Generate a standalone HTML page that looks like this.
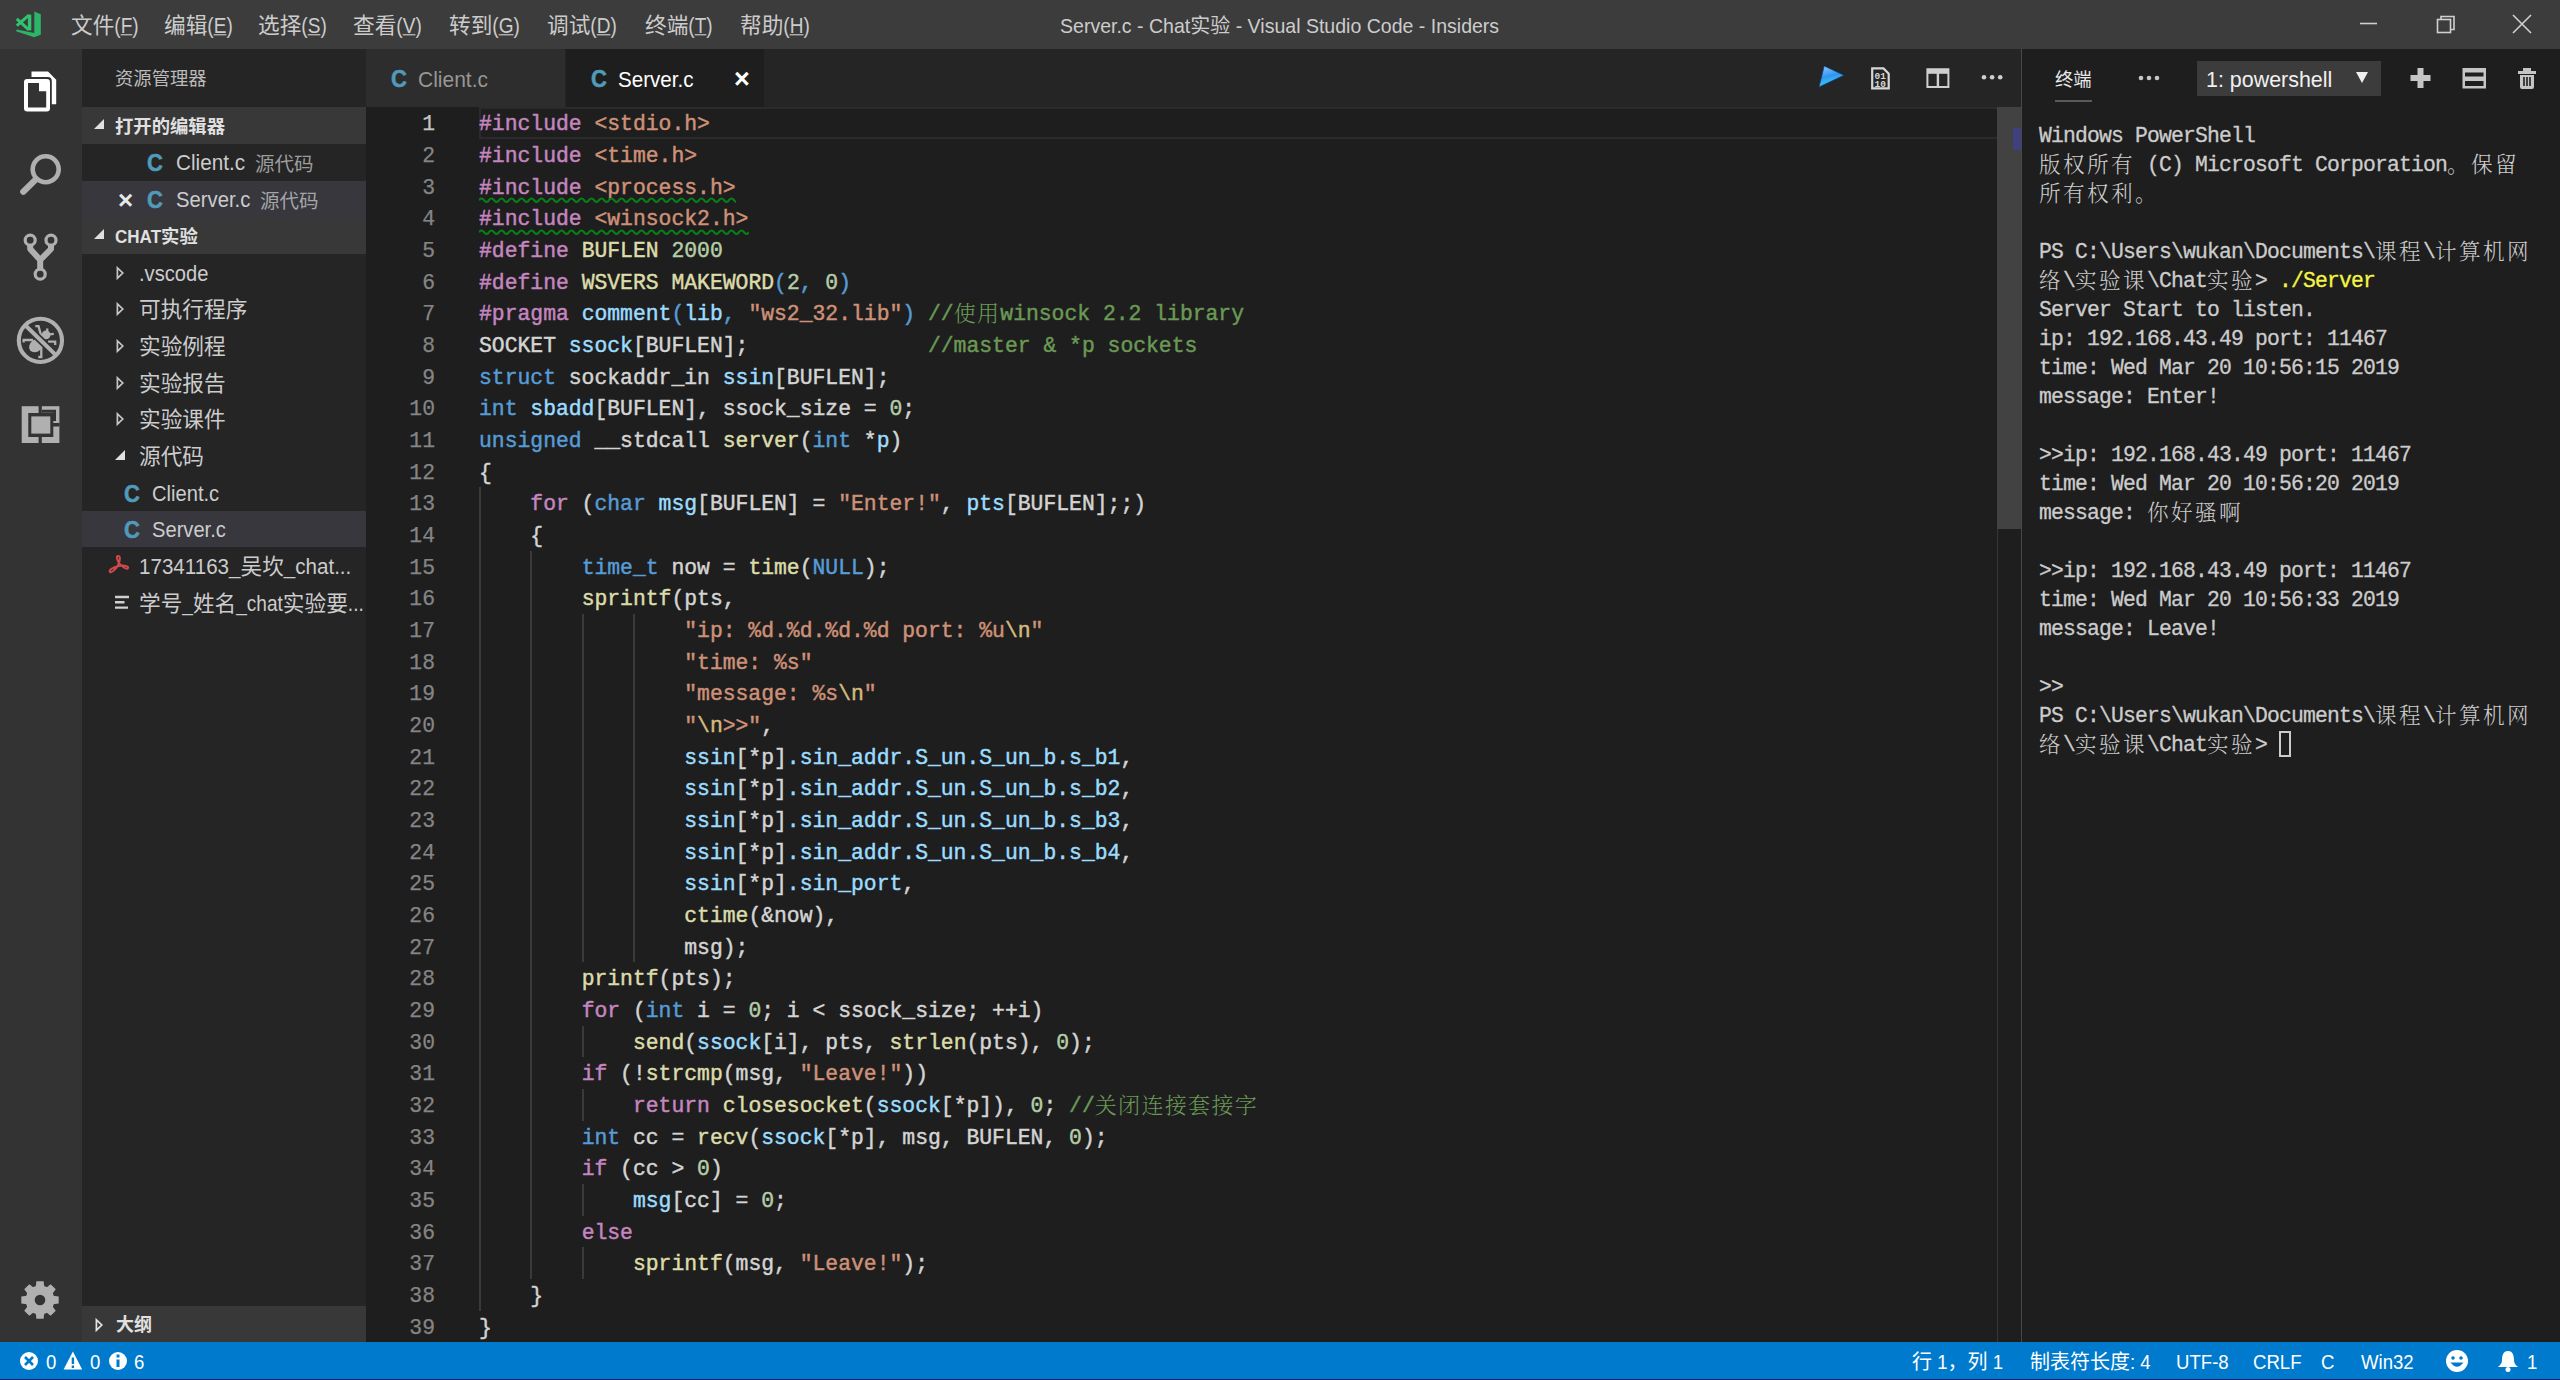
<!DOCTYPE html>
<html lang="zh-CN"><head><meta charset="utf-8"><title>Server.c - Chat实验 - Visual Studio Code - Insiders</title>
<style>
html,body{margin:0;padding:0;background:#1e1e1e;overflow:hidden}
body{width:2560px;height:1380px;position:relative;font-family:"Liberation Sans","Noto Sans CJK SC",sans-serif;color:#ccc;font-size:21.67px}
.a{position:absolute}
.t{position:absolute;white-space:nowrap;height:40px;line-height:40px;margin-top:-20px}
.l{display:inline-block;line-height:1;font-size:calc(var(--k,.93)*1em);transform:scaleY(calc(1/var(--k,.93)));transform-origin:0 81%}
svg{position:absolute;overflow:visible}
#title{left:0;top:0;width:2560px;height:49px;background:#3c3c3c}
#act{left:0;top:49px;width:82px;height:1293px;background:#333}
#side{left:82px;top:49px;width:284px;height:1293px;background:#252526}
#tabs{left:366px;top:49px;width:1655px;height:58px;background:#252526}
#ed{left:366px;top:107px;width:1655px;height:1235px;background:#1e1e1e}
#pan{left:2021px;top:49px;width:539px;height:1293px;background:#1e1e1e;border-left:1px solid #484848;box-sizing:border-box}
#stat{left:0;top:1342px;width:2560px;height:38px;background:#007acc;color:#fff;border-bottom:1px solid #0b1f6b;box-sizing:border-box}
.mono{font-family:"Liberation Mono","Noto Serif CJK SC",monospace}
.cl{position:absolute;left:479px;height:32px;line-height:32px;white-space:pre;font-family:"Liberation Mono","Noto Serif CJK SC",monospace;font-size:21.39px;color:#d4d4d4;-webkit-text-stroke:0.45px}
.ln{position:absolute;left:366px;width:69px;-webkit-text-stroke:0.25px;text-align:right;height:32px;line-height:32px;font-family:"Liberation Mono",monospace;font-size:21.39px;color:#858585}
.cj{font-size:22px;letter-spacing:1.33px;font-weight:300;-webkit-text-stroke:0;font-family:"Noto Serif CJK SC",serif;line-height:1;position:relative;top:1px}
.k{color:#c586c0}.b{color:#569cd6}.s{color:#ce9178}.f{color:#dcdcaa}.v{color:#9cdcfe}.n{color:#b5cea8}.c{color:#6a9955}.e{color:#d7ba7d}
.g{position:absolute;width:2px;background:#3a3a3a}
.tl{-webkit-text-stroke:0.3px;position:absolute;left:2039px;height:29px;line-height:29px;white-space:pre;font-family:"Liberation Mono","Noto Serif CJK SC",monospace;font-size:21.39px;letter-spacing:-0.83px;color:#ccc}
.tl .cj{letter-spacing:2.4px;font-size:21.6px}
.y{color:#f5f543}
.hdr{position:absolute;left:82px;width:284px;height:37px;background:#383838}
.sel{position:absolute;left:82px;width:284px;height:37px;background:#37373d}
.bd{font-weight:bold}
</style></head>
<body>
<div class="a" id="title"></div>
<div class="a" id="act"></div>
<div class="a" id="side"></div>
<div class="a" id="tabs"></div>
<div class="a" id="ed"></div>
<div class="a" id="pan"></div>
<div class="a" id="stat"></div>
<svg style="left:0;top:0" width="60" height="49" viewBox="0 0 60 49"><path d="M34.3 11.4 L40.8 14.2 V34.8 L34.1 37.2 L16 31.3 L16.8 29.6 L34.3 33 Z" fill="#2bb566"/><g fill="none" stroke="#2fc46e" stroke-width="3"><path d="M16.8 18.8 L28.6 29.6 M16.8 25.6 L29 15.2"/><path d="M29.6 14.6 V30.4" stroke-width="3.4"/></g></svg>
<div class="t" style="left:71px;top:25.5px;color:#cccccc;">文件<span class="l" style="--k:.88">(<u>F</u>)</span></div>
<div class="t" style="left:164px;top:25.5px;color:#cccccc;">编辑<span class="l" style="--k:.88">(<u>E</u>)</span></div>
<div class="t" style="left:258px;top:25.5px;color:#cccccc;">选择<span class="l" style="--k:.88">(<u>S</u>)</span></div>
<div class="t" style="left:353px;top:25.5px;color:#cccccc;">查看<span class="l" style="--k:.88">(<u>V</u>)</span></div>
<div class="t" style="left:449px;top:25.5px;color:#cccccc;">转到<span class="l" style="--k:.88">(<u>G</u>)</span></div>
<div class="t" style="left:547px;top:25.5px;color:#cccccc;">调试<span class="l" style="--k:.88">(<u>D</u>)</span></div>
<div class="t" style="left:645px;top:25.5px;color:#cccccc;">终端<span class="l" style="--k:.88">(<u>T</u>)</span></div>
<div class="t" style="left:740px;top:25.5px;color:#cccccc;">帮助<span class="l" style="--k:.88">(<u>H</u>)</span></div>
<div class="t" style="left:1060px;top:26px;font-size:20px;color:#cccccc;"><span class="l" style="--k:0.977">Server.c&nbsp;-&nbsp;Chat</span>实验<span class="l" style="--k:0.977">&nbsp;-&nbsp;Visual&nbsp;Studio&nbsp;Code&nbsp;-&nbsp;Insiders</span></div>
<svg style="left:2340px;top:0" width="220" height="49" viewBox="0 0 220 49" fill="none" stroke="#d0d0d0" stroke-width="1.6"><path d="M20 23.5 H37"/><rect x="97.5" y="19.5" width="13" height="13"/><path d="M101 19.5 V16.5 H114 V29.5 H110.5"/><path d="M173 15 L191 33 M191 15 L173 33"/></svg>
<svg style="left:0;top:49px" width="82" height="460" viewBox="0 0 82 460">
<path d="M31.5 22.5 H48 L56.2 30.7 V55.2 H31.5 Z" fill="#fff"/>
<rect x="22" y="28" width="29.8" height="36" rx="4" fill="#333"/>
<rect x="24" y="30" width="26" height="32.5" rx="3.2" fill="#fff"/>
<path d="M28 34 H39 V42.2 H46.2 V58.5 H28 Z" fill="#333"/>
<g fill="none" stroke="#b0b0b0">
<circle cx="45.7" cy="120.3" r="13" stroke-width="4.6"/><path d="M36 130.2 L23.3 142.8" stroke-linecap="round" stroke-width="6.2"/>
</g>
<g fill="none" stroke="#b0b0b0" stroke-width="6" stroke-linejoin="round">
<path d="M30.2 196 V200 L40.2 211 V221 M51 196 V200 L40.2 211"/>
</g>
<g fill="#333" stroke="#b0b0b0" stroke-width="3.2">
<circle cx="30.2" cy="191.2" r="5"/><circle cx="51" cy="191.2" r="5"/><circle cx="40.2" cy="225.2" r="5"/>
</g>
<g fill="#b0b0b0"><ellipse cx="36.3" cy="296.3" rx="8" ry="6" transform="rotate(-40 36.3 296.3)"/><circle cx="46.1" cy="285.8" r="4.4"/></g>
<g fill="none" stroke="#b0b0b0" stroke-width="2.3"><path d="M23.6 293.4 V291 H33 M41.3 297 V308 H38.3 M41.5 288 L38.5 277.2 H35.3 M49 285.4 L53.8 284.9 M48 292.7 H55.2 V296 M47.2 279.6 V283"/></g>
<g fill="none"><path d="M25.8 276.8 L55.4 305.6" stroke="#333" stroke-width="7.6"/><path d="M25.8 276.8 L55.4 305.6" stroke="#b0b0b0" stroke-width="4"/><circle cx="40.4" cy="291.4" r="21.6" stroke="#b0b0b0" stroke-width="4.1"/></g>
<rect x="21.7" y="357.2" width="37.7" height="36.8" fill="#b0b0b0"/>
<rect x="28.3" y="364" width="25" height="24" fill="#333"/>
<rect x="31.3" y="367.4" width="19" height="17.2" fill="#b0b0b0"/>
<path d="M38.6 357 H41.8 V365 H38.6 Z M38.6 387 H41.8 V394.2 H38.6 Z M52 374 H59.6 V377.6 H52 Z M42 360.8 H56 V372 H53 V363.8 H42 Z" fill="#333"/>
</svg>
<svg style="left:20.4px;top:1280.4px" width="40" height="40" viewBox="-20 -20 40 40"><g fill="#b0b0b0"><circle r="14.4"/><path d="M-3.6 -18.7 H3.6 L4.6 -11 H-4.6 Z" transform="rotate(0)"/><path d="M-3.6 -18.7 H3.6 L4.6 -11 H-4.6 Z" transform="rotate(45)"/><path d="M-3.6 -18.7 H3.6 L4.6 -11 H-4.6 Z" transform="rotate(90)"/><path d="M-3.6 -18.7 H3.6 L4.6 -11 H-4.6 Z" transform="rotate(135)"/><path d="M-3.6 -18.7 H3.6 L4.6 -11 H-4.6 Z" transform="rotate(180)"/><path d="M-3.6 -18.7 H3.6 L4.6 -11 H-4.6 Z" transform="rotate(225)"/><path d="M-3.6 -18.7 H3.6 L4.6 -11 H-4.6 Z" transform="rotate(270)"/><path d="M-3.6 -18.7 H3.6 L4.6 -11 H-4.6 Z" transform="rotate(315)"/></g><circle r="5.3" fill="#333"/></svg>
<div class="t" style="left:115px;top:78.5px;font-size:18.33px;color:#bbbbbb;">资源管理器</div>
<div class="hdr" style="top:107px"></div>
<svg style="left:94px;top:119px" width="11" height="11" viewBox="0 0 11 11"><path d="M10 0 V10 H0 Z" fill="#e0e0e0"/></svg>
<div class="t" style="left:115px;top:127px;font-size:18.33px;color:#e0e0e0;font-weight:bold;">打开的编辑器</div>
<div class="t" style="left:147px;top:163px;font-size:24.5px;color:#519aba;font-weight:bold;font-family:'Liberation Sans',sans-serif;-webkit-text-stroke:0.5px;"><span class="l" style="--k:.9">C</span></div>
<div class="t" style="left:176px;top:163px;color:#cccccc;"><span class="l" style="--k:0.955">Client.c</span></div>
<div class="t" style="left:255px;top:164px;font-size:19.5px;color:#9d9d9d;">源代码</div>
<div class="sel" style="top:181px"></div>
<div class="t" style="left:118px;top:199.5px;font-size:26px;color:#e8e8e8;font-weight:bold;">×</div>
<div class="t" style="left:147px;top:200px;font-size:24.5px;color:#519aba;font-weight:bold;font-family:'Liberation Sans',sans-serif;-webkit-text-stroke:0.5px;"><span class="l" style="--k:.9">C</span></div>
<div class="t" style="left:176px;top:200px;color:#cccccc;"><span class="l" style="--k:0.935">Server.c</span></div>
<div class="t" style="left:260px;top:201px;font-size:19.5px;color:#a5a5a8;">源代码</div>
<div class="hdr" style="top:218px;height:36px"></div>
<svg style="left:94px;top:229px" width="11" height="11" viewBox="0 0 11 11"><path d="M10 0 V10 H0 Z" fill="#e0e0e0"/></svg>
<div class="t" style="left:115px;top:237px;font-size:18.33px;color:#e0e0e0;font-weight:bold;"><span class="l">CHAT</span>实验</div>
<svg style="left:116px;top:265.5px" width="9" height="14" viewBox="0 0 9 14"><path d="M1.4 1.8 L6.8 7 L1.4 12.2 Z" fill="none" stroke="#c5c5c5" stroke-width="1.7"/></svg>
<div class="t" style="left:139px;top:273.7px;color:#cccccc;"><span class="l">.vscode</span></div>
<svg style="left:116px;top:302.16700000000003px" width="9" height="14" viewBox="0 0 9 14"><path d="M1.4 1.8 L6.8 7 L1.4 12.2 Z" fill="none" stroke="#c5c5c5" stroke-width="1.7"/></svg>
<div class="t" style="left:139px;top:310.367px;color:#cccccc;">可执行程序</div>
<svg style="left:116px;top:338.834px" width="9" height="14" viewBox="0 0 9 14"><path d="M1.4 1.8 L6.8 7 L1.4 12.2 Z" fill="none" stroke="#c5c5c5" stroke-width="1.7"/></svg>
<div class="t" style="left:139px;top:347.034px;color:#cccccc;">实验例程</div>
<svg style="left:116px;top:375.501px" width="9" height="14" viewBox="0 0 9 14"><path d="M1.4 1.8 L6.8 7 L1.4 12.2 Z" fill="none" stroke="#c5c5c5" stroke-width="1.7"/></svg>
<div class="t" style="left:139px;top:383.70099999999996px;color:#cccccc;">实验报告</div>
<svg style="left:116px;top:412.168px" width="9" height="14" viewBox="0 0 9 14"><path d="M1.4 1.8 L6.8 7 L1.4 12.2 Z" fill="none" stroke="#c5c5c5" stroke-width="1.7"/></svg>
<div class="t" style="left:139px;top:420.368px;color:#cccccc;">实验课件</div>
<svg style="left:115px;top:449.83500000000004px" width="11" height="11" viewBox="0 0 11 11"><path d="M10 0 V10 H0 Z" fill="#e0e0e0"/></svg>
<div class="t" style="left:139px;top:457.035px;color:#cccccc;">源代码</div>
<div class="t" style="left:124px;top:493.502px;font-size:24.5px;color:#519aba;font-weight:bold;font-family:'Liberation Sans',sans-serif;-webkit-text-stroke:0.5px;"><span class="l" style="--k:.9">C</span></div>
<div class="t" style="left:152px;top:493.702px;color:#cccccc;"><span class="l">Client.c</span></div>
<div class="sel" style="top:511px;height:36px"></div>
<div class="t" style="left:124px;top:530.169px;font-size:24.5px;color:#519aba;font-weight:bold;font-family:'Liberation Sans',sans-serif;-webkit-text-stroke:0.5px;"><span class="l" style="--k:.9">C</span></div>
<div class="t" style="left:152px;top:530.369px;color:#cccccc;"><span class="l">Server.c</span></div>
<svg style="left:108px;top:554.836px" width="22" height="20" viewBox="0 0 22 20" fill="none" stroke="#d04a4a" stroke-width="2"><path d="M10 1 C13 1 12 6 10 10 C8 14 4 18 2 17 C0 15 6 12 11 11 C16 10 21 11 20 13 C19 15 14 12 11 8 C9 5 8 1 10 1"/></svg>
<div class="t" style="left:139px;top:567.0360000000001px;color:#cccccc;"><span class="l" style="--k:0.95">17341163_</span>吴坎<span class="l" style="--k:0.95">_chat...</span></div>
<svg style="left:115px;top:594.503px" width="16" height="16" viewBox="0 0 16 16" stroke="#d0d0d0" stroke-width="2.4"><path d="M0 2 H14 M0 7.3 H9.5 M0 12.6 H13"/></svg>
<div class="t" style="left:139px;top:603.7030000000001px;color:#cccccc;">学号<span class="l" style="--k:0.88">_</span>姓名<span class="l" style="--k:0.88">_chat</span>实验要<span class="l" style="--k:0.88">...</span></div>
<div class="hdr" style="top:1306px;height:36px"></div>
<svg style="left:95px;top:1317.5px" width="9" height="14" viewBox="0 0 9 14"><path d="M1.4 1.8 L6.8 7 L1.4 12.2 Z" fill="none" stroke="#e4e4e4" stroke-width="1.7"/></svg>
<div class="t" style="left:116px;top:1325.2px;font-size:18px;color:#e0e0e0;font-weight:bold;">大纲</div>
<div class="a" style="left:366px;top:49px;width:199px;height:58px;background:#2d2d2d"></div>
<div class="a" style="left:566px;top:49px;width:198px;height:58px;background:#1e1e1e"></div>
<div class="t" style="left:391px;top:79px;font-size:24.5px;color:#519aba;font-weight:bold;font-family:'Liberation Sans',sans-serif;-webkit-text-stroke:0.5px;"><span class="l" style="--k:.9">C</span></div>
<div class="t" style="left:418px;top:79.5px;color:#969696;"><span class="l" style="--k:0.97">Client.c</span></div>
<div class="t" style="left:591px;top:79px;font-size:24.5px;color:#519aba;font-weight:bold;font-family:'Liberation Sans',sans-serif;-webkit-text-stroke:0.5px;"><span class="l" style="--k:.9">C</span></div>
<div class="t" style="left:618px;top:79.5px;color:#ffffff;"><span class="l" style="--k:0.95">Server.c</span></div>
<div class="t" style="left:734px;top:78.5px;font-size:27px;color:#ffffff;font-weight:bold;">×</div>
<svg style="left:1810px;top:60px" width="200" height="36" viewBox="0 0 200 36">
<defs><linearGradient id="pg" x1="0.2" y1="0" x2="0.5" y2="1"><stop offset="0" stop-color="#8cc6ff"/><stop offset="0.5" stop-color="#2f96ee"/><stop offset="1" stop-color="#45dcff"/></linearGradient></defs>
<path d="M14.2 5.9 L33.9 15.3 L9 27 Z" fill="url(#pg)" stroke="#123f78" stroke-width="0.8"/>
<g fill="none" stroke="#d6d6d6" stroke-width="2.2"><path d="M62.2 8.4 H73.5 L78.7 13.6 V28.3 H62.2 Z"/></g>
<g fill="#d6d6d6" font-family="Liberation Mono,monospace" font-size="9.5" font-weight="bold"><text x="64.6" y="19">01</text><text x="64.6" y="27">10</text></g>
<g fill="none" stroke="#cfcfcf" stroke-width="2"><rect x="117.4" y="9.3" width="21" height="17.7"/><path d="M117.4 11.3 H138.4" stroke-width="5"/><path d="M127.9 10 V27" stroke-width="2.4"/></g>
<g fill="#d0d0d0"><circle cx="174" cy="17.2" r="2.3"/><circle cx="182.1" cy="17.2" r="2.3"/><circle cx="190.2" cy="17.2" r="2.3"/></g>
</svg>
<div class="a" style="left:479px;top:107px;width:1530px;height:31.5px;border:2px solid #2b2b2b;box-sizing:border-box"></div>
<div class="a" style="left:1997px;top:107px;width:1px;height:1235px;background:#363636"></div>
<div class="a" style="left:1997px;top:107px;width:24px;height:422px;background:#424242"></div>
<div class="a" style="left:2013px;top:128px;width:8px;height:22px;background:#40407e"></div>
<div class="g" style="left:479.0px;top:487.3px;height:823.3px"></div>
<div class="g" style="left:530.3px;top:550.7px;height:728.3px"></div>
<div class="g" style="left:581.7px;top:614.0px;height:348.3px"></div>
<div class="g" style="left:633.0px;top:614.0px;height:348.3px"></div>
<div class="g" style="left:581.7px;top:1025.7px;height:31.7px"></div>
<div class="g" style="left:581.7px;top:1089.0px;height:31.7px"></div>
<div class="g" style="left:581.7px;top:1184.0px;height:31.7px"></div>
<div class="g" style="left:581.7px;top:1247.3px;height:31.7px"></div>
<div class="ln" style="top:108.33px;color:#c6c6c6">1</div>
<div class="cl" style="top:108.33px"><span class="k">#include</span><span class="s"> &lt;stdio.h&gt;</span></div>
<div class="ln" style="top:140.00px;color:#858585">2</div>
<div class="cl" style="top:140.00px"><span class="k">#include</span><span class="s"> &lt;time.h&gt;</span></div>
<div class="ln" style="top:171.66px;color:#858585">3</div>
<div class="cl" style="top:171.66px"><span class="k">#include</span><span class="s"> &lt;process.h&gt;</span></div>
<div class="ln" style="top:203.33px;color:#858585">4</div>
<div class="cl" style="top:203.33px"><span class="k">#include</span><span class="s"> &lt;winsock2.h&gt;</span></div>
<div class="ln" style="top:235.00px;color:#858585">5</div>
<div class="cl" style="top:235.00px"><span class="k">#define</span> <span class="f">BUFLEN</span> <span class="n">2000</span></div>
<div class="ln" style="top:266.66px;color:#858585">6</div>
<div class="cl" style="top:266.66px"><span class="k">#define</span> <span class="f">WSVERS MAKEWORD</span><span class="b">(</span><span class="n">2</span><span class="b">, </span><span class="n">0</span><span class="b">)</span></div>
<div class="ln" style="top:298.33px;color:#858585">7</div>
<div class="cl" style="top:298.33px"><span class="k">#pragma</span> <span class="v">comment</span><span class="b">(</span><span class="v">lib</span><span class="b">, </span><span class="s">"ws2_32.lib"</span><span class="b">)</span> <span class="c">//<span class="cj">使用</span>winsock 2.2 library</span></div>
<div class="ln" style="top:330.00px;color:#858585">8</div>
<div class="cl" style="top:330.00px">SOCKET <span class="v">ssock</span>[BUFLEN];              <span class="c">//master &amp; *p sockets</span></div>
<div class="ln" style="top:361.66px;color:#858585">9</div>
<div class="cl" style="top:361.66px"><span class="b">struct</span> sockaddr_in <span class="v">ssin</span>[BUFLEN];</div>
<div class="ln" style="top:393.33px;color:#858585">10</div>
<div class="cl" style="top:393.33px"><span class="b">int</span> <span class="v">sbadd</span>[BUFLEN], ssock_size = <span class="n">0</span>;</div>
<div class="ln" style="top:425.00px;color:#858585">11</div>
<div class="cl" style="top:425.00px"><span class="b">unsigned</span> __stdcall <span class="f">server</span>(<span class="b">int</span> *<span class="v">p</span>)</div>
<div class="ln" style="top:456.66px;color:#858585">12</div>
<div class="cl" style="top:456.66px">{</div>
<div class="ln" style="top:488.33px;color:#858585">13</div>
<div class="cl" style="top:488.33px">    <span class="k">for</span> (<span class="b">char</span> <span class="v">msg</span>[BUFLEN] = <span class="s">"Enter!"</span>, <span class="v">pts</span>[BUFLEN];;)</div>
<div class="ln" style="top:520.00px;color:#858585">14</div>
<div class="cl" style="top:520.00px">    {</div>
<div class="ln" style="top:551.66px;color:#858585">15</div>
<div class="cl" style="top:551.66px">        <span class="b">time_t</span> now = <span class="f">time</span>(<span class="b">NULL</span>);</div>
<div class="ln" style="top:583.33px;color:#858585">16</div>
<div class="cl" style="top:583.33px">        <span class="f">sprintf</span>(pts,</div>
<div class="ln" style="top:615.00px;color:#858585">17</div>
<div class="cl" style="top:615.00px">                <span class="s">"ip: %d.%d.%d.%d port: %u</span><span class="e">\n</span><span class="s">"</span></div>
<div class="ln" style="top:646.66px;color:#858585">18</div>
<div class="cl" style="top:646.66px">                <span class="s">"time: %s"</span></div>
<div class="ln" style="top:678.33px;color:#858585">19</div>
<div class="cl" style="top:678.33px">                <span class="s">"message: %s</span><span class="e">\n</span><span class="s">"</span></div>
<div class="ln" style="top:710.00px;color:#858585">20</div>
<div class="cl" style="top:710.00px">                <span class="s">"</span><span class="e">\n</span><span class="s">&gt;&gt;"</span>,</div>
<div class="ln" style="top:741.66px;color:#858585">21</div>
<div class="cl" style="top:741.66px">                <span class="v">ssin</span>[*p]<span class="v">.sin_addr.S_un.S_un_b.s_b1</span>,</div>
<div class="ln" style="top:773.33px;color:#858585">22</div>
<div class="cl" style="top:773.33px">                <span class="v">ssin</span>[*p]<span class="v">.sin_addr.S_un.S_un_b.s_b2</span>,</div>
<div class="ln" style="top:805.00px;color:#858585">23</div>
<div class="cl" style="top:805.00px">                <span class="v">ssin</span>[*p]<span class="v">.sin_addr.S_un.S_un_b.s_b3</span>,</div>
<div class="ln" style="top:836.66px;color:#858585">24</div>
<div class="cl" style="top:836.66px">                <span class="v">ssin</span>[*p]<span class="v">.sin_addr.S_un.S_un_b.s_b4</span>,</div>
<div class="ln" style="top:868.33px;color:#858585">25</div>
<div class="cl" style="top:868.33px">                <span class="v">ssin</span>[*p]<span class="v">.sin_port</span>,</div>
<div class="ln" style="top:900.00px;color:#858585">26</div>
<div class="cl" style="top:900.00px">                <span class="f">ctime</span>(&amp;now),</div>
<div class="ln" style="top:931.66px;color:#858585">27</div>
<div class="cl" style="top:931.66px">                msg);</div>
<div class="ln" style="top:963.33px;color:#858585">28</div>
<div class="cl" style="top:963.33px">        <span class="f">printf</span>(pts);</div>
<div class="ln" style="top:995.00px;color:#858585">29</div>
<div class="cl" style="top:995.00px">        <span class="k">for</span> (<span class="b">int</span> i = <span class="n">0</span>; i &lt; ssock_size; ++i)</div>
<div class="ln" style="top:1026.66px;color:#858585">30</div>
<div class="cl" style="top:1026.66px">            <span class="f">send</span>(<span class="v">ssock</span>[i], pts, <span class="f">strlen</span>(pts), <span class="n">0</span>);</div>
<div class="ln" style="top:1058.33px;color:#858585">31</div>
<div class="cl" style="top:1058.33px">        <span class="k">if</span> (!<span class="f">strcmp</span>(msg, <span class="s">"Leave!"</span>))</div>
<div class="ln" style="top:1090.00px;color:#858585">32</div>
<div class="cl" style="top:1090.00px">            <span class="k">return</span> <span class="f">closesocket</span>(<span class="v">ssock</span>[*p]), <span class="n">0</span>; <span class="c">//<span class="cj">关闭连接套接字</span></span></div>
<div class="ln" style="top:1121.66px;color:#858585">33</div>
<div class="cl" style="top:1121.66px">        <span class="b">int</span> cc = <span class="f">recv</span>(<span class="v">ssock</span>[*p], msg, BUFLEN, <span class="n">0</span>);</div>
<div class="ln" style="top:1153.33px;color:#858585">34</div>
<div class="cl" style="top:1153.33px">        <span class="k">if</span> (cc &gt; <span class="n">0</span>)</div>
<div class="ln" style="top:1185.00px;color:#858585">35</div>
<div class="cl" style="top:1185.00px">            <span class="v">msg</span>[cc] = <span class="n">0</span>;</div>
<div class="ln" style="top:1216.66px;color:#858585">36</div>
<div class="cl" style="top:1216.66px">        <span class="k">else</span></div>
<div class="ln" style="top:1248.33px;color:#858585">37</div>
<div class="cl" style="top:1248.33px">            <span class="f">sprintf</span>(msg, <span class="s">"Leave!"</span>);</div>
<div class="ln" style="top:1280.00px;color:#858585">38</div>
<div class="cl" style="top:1280.00px">    }</div>
<div class="ln" style="top:1311.66px;color:#858585">39</div>
<div class="cl" style="top:1311.66px">}</div>
<svg style="left:479px;top:197px;overflow:hidden" width="257" height="7" viewBox="0 0 257 7"><path d="M0 3.2 Q2.5 -0.3 5 3.2 Q7.5 6.7 10 3.2 Q12.5 -0.3 15 3.2 Q17.5 6.7 20 3.2 Q22.5 -0.3 25 3.2 Q27.5 6.7 30 3.2 Q32.5 -0.3 35 3.2 Q37.5 6.7 40 3.2 Q42.5 -0.3 45 3.2 Q47.5 6.7 50 3.2 Q52.5 -0.3 55 3.2 Q57.5 6.7 60 3.2 Q62.5 -0.3 65 3.2 Q67.5 6.7 70 3.2 Q72.5 -0.3 75 3.2 Q77.5 6.7 80 3.2 Q82.5 -0.3 85 3.2 Q87.5 6.7 90 3.2 Q92.5 -0.3 95 3.2 Q97.5 6.7 100 3.2 Q102.5 -0.3 105 3.2 Q107.5 6.7 110 3.2 Q112.5 -0.3 115 3.2 Q117.5 6.7 120 3.2 Q122.5 -0.3 125 3.2 Q127.5 6.7 130 3.2 Q132.5 -0.3 135 3.2 Q137.5 6.7 140 3.2 Q142.5 -0.3 145 3.2 Q147.5 6.7 150 3.2 Q152.5 -0.3 155 3.2 Q157.5 6.7 160 3.2 Q162.5 -0.3 165 3.2 Q167.5 6.7 170 3.2 Q172.5 -0.3 175 3.2 Q177.5 6.7 180 3.2 Q182.5 -0.3 185 3.2 Q187.5 6.7 190 3.2 Q192.5 -0.3 195 3.2 Q197.5 6.7 200 3.2 Q202.5 -0.3 205 3.2 Q207.5 6.7 210 3.2 Q212.5 -0.3 215 3.2 Q217.5 6.7 220 3.2 Q222.5 -0.3 225 3.2 Q227.5 6.7 230 3.2 Q232.5 -0.3 235 3.2 Q237.5 6.7 240 3.2 Q242.5 -0.3 245 3.2 Q247.5 6.7 250 3.2 Q252.5 -0.3 255 3.2 Q257.5 6.7 260 3.2" fill="none" stroke="#08801a" stroke-width="2.1"/></svg>
<svg style="left:479px;top:228.7px;overflow:hidden" width="270" height="7" viewBox="0 0 270 7"><path d="M0 3.2 Q2.5 -0.3 5 3.2 Q7.5 6.7 10 3.2 Q12.5 -0.3 15 3.2 Q17.5 6.7 20 3.2 Q22.5 -0.3 25 3.2 Q27.5 6.7 30 3.2 Q32.5 -0.3 35 3.2 Q37.5 6.7 40 3.2 Q42.5 -0.3 45 3.2 Q47.5 6.7 50 3.2 Q52.5 -0.3 55 3.2 Q57.5 6.7 60 3.2 Q62.5 -0.3 65 3.2 Q67.5 6.7 70 3.2 Q72.5 -0.3 75 3.2 Q77.5 6.7 80 3.2 Q82.5 -0.3 85 3.2 Q87.5 6.7 90 3.2 Q92.5 -0.3 95 3.2 Q97.5 6.7 100 3.2 Q102.5 -0.3 105 3.2 Q107.5 6.7 110 3.2 Q112.5 -0.3 115 3.2 Q117.5 6.7 120 3.2 Q122.5 -0.3 125 3.2 Q127.5 6.7 130 3.2 Q132.5 -0.3 135 3.2 Q137.5 6.7 140 3.2 Q142.5 -0.3 145 3.2 Q147.5 6.7 150 3.2 Q152.5 -0.3 155 3.2 Q157.5 6.7 160 3.2 Q162.5 -0.3 165 3.2 Q167.5 6.7 170 3.2 Q172.5 -0.3 175 3.2 Q177.5 6.7 180 3.2 Q182.5 -0.3 185 3.2 Q187.5 6.7 190 3.2 Q192.5 -0.3 195 3.2 Q197.5 6.7 200 3.2 Q202.5 -0.3 205 3.2 Q207.5 6.7 210 3.2 Q212.5 -0.3 215 3.2 Q217.5 6.7 220 3.2 Q222.5 -0.3 225 3.2 Q227.5 6.7 230 3.2 Q232.5 -0.3 235 3.2 Q237.5 6.7 240 3.2 Q242.5 -0.3 245 3.2 Q247.5 6.7 250 3.2 Q252.5 -0.3 255 3.2 Q257.5 6.7 260 3.2 Q262.5 -0.3 265 3.2 Q267.5 6.7 270 3.2" fill="none" stroke="#08801a" stroke-width="2.1"/></svg>
<div class="t" style="left:2055px;top:79.5px;font-size:18.33px;color:#e7e7e7;">终端</div>
<div class="a" style="left:2055px;top:100px;width:37px;height:2px;background:#5a5a5a"></div>
<svg style="left:2130px;top:60px" width="40" height="36"><g fill="#c5c5c5"><circle cx="11" cy="18" r="2.3"/><circle cx="19" cy="18" r="2.3"/><circle cx="27" cy="18" r="2.3"/></g></svg>
<div class="a" style="left:2197px;top:61px;width:183.5px;height:34.5px;background:#3c3c3c"></div>
<div class="t" style="left:2206px;top:79.5px;color:#f0f0f0;"><span class="l" style="--k:0.99">1:&nbsp;powershell</span></div>
<svg style="left:2355px;top:71px" width="14" height="13"><path d="M1 1 H13 L7 12 Z" fill="#f0f0f0"/></svg>
<svg style="left:2400px;top:60px" width="150" height="36" viewBox="0 0 150 36"><g fill="#c5c5c5">
<path d="M17.5 8 H23.5 V15 H30.5 V21 H23.5 V28 H17.5 V21 H10.5 V15 H17.5 Z"/>
<path d="M62.5 8 H86 V28.5 H62.5 Z M65 12.5 V16.5 H83.5 V12.5 Z M65 21 V26 H83.5 V21 Z" fill-rule="evenodd"/>
<path d="M118 11 H136 V14 H118 Z M123 8 H131 V11 H123 Z M120 15 H134 V27 Q134 29 132 29 H122 Q120 29 120 27 Z"/>
</g><g stroke="#1e1e1e" stroke-width="1.6"><path d="M124 17 V26 M127 17 V26 M130 17 V26"/></g></svg>
<div class="tl" style="top:122px">Windows PowerShell</div>
<div class="tl" style="top:151px"><span class="cj">版权所有</span> (C) Microsoft Corporation<span class="cj">。保留</span></div>
<div class="tl" style="top:180px"><span class="cj">所有权利。</span></div>
<div class="tl" style="top:238px">PS C:\Users\wukan\Documents\<span class="cj">课程</span>\<span class="cj">计算机网</span></div>
<div class="tl" style="top:267px"><span class="cj">络</span>\<span class="cj">实验课</span>\Chat<span class="cj">实验</span>&gt; <span class="y">./Server</span></div>
<div class="tl" style="top:296px">Server Start to listen.</div>
<div class="tl" style="top:325px">ip: 192.168.43.49 port: 11467</div>
<div class="tl" style="top:354px">time: Wed Mar 20 10:56:15 2019</div>
<div class="tl" style="top:383px">message: Enter!</div>
<div class="tl" style="top:441px">&gt;&gt;ip: 192.168.43.49 port: 11467</div>
<div class="tl" style="top:470px">time: Wed Mar 20 10:56:20 2019</div>
<div class="tl" style="top:499px">message: <span class="cj">你好骚啊</span></div>
<div class="tl" style="top:557px">&gt;&gt;ip: 192.168.43.49 port: 11467</div>
<div class="tl" style="top:586px">time: Wed Mar 20 10:56:33 2019</div>
<div class="tl" style="top:615px">message: Leave!</div>
<div class="tl" style="top:673px">&gt;&gt;</div>
<div class="tl" style="top:702px">PS C:\Users\wukan\Documents\<span class="cj">课程</span>\<span class="cj">计算机网</span></div>
<div class="tl" style="top:731px"><span class="cj">络</span>\<span class="cj">实验课</span>\Chat<span class="cj">实验</span>&gt; </div>
<div class="a" style="left:2279px;top:731px;width:12px;height:26px;border:2px solid #ccc;box-sizing:border-box"></div>
<svg style="left:0;top:1342px" width="160" height="38" viewBox="0 0 160 38"><g fill="#fff">
<circle cx="29" cy="19" r="9"/><path d="M72.9 9.5 L82.2 27.6 H63.6 Z"/><circle cx="118" cy="19" r="9"/></g>
<g stroke="#007acc" stroke-width="2.6" fill="none"><path d="M25 15 L33 23 M33 15 L25 23"/><path d="M72.9 15.5 V22 M72.9 23.6 V26" stroke-width="2.4"/><path d="M118 17.5 V25" stroke-width="3"/><path d="M118 12.5 V15.5" stroke-width="3"/></g></svg>
<div class="t" style="left:46px;top:1361.5px;font-size:20px;color:#fff;"><span class="l">0</span></div>
<div class="t" style="left:90px;top:1361.5px;font-size:20px;color:#fff;"><span class="l">0</span></div>
<div class="t" style="left:134px;top:1361.5px;font-size:20px;color:#fff;"><span class="l">6</span></div>
<div class="t" style="left:1912px;top:1361.5px;font-size:20px;color:#fff;">行<span class="l">&nbsp;1</span>，列<span class="l">&nbsp;1</span></div>
<div class="t" style="left:2030px;top:1361.5px;font-size:20px;color:#fff;">制表符长度<span class="l">:&nbsp;4</span></div>
<div class="t" style="left:2176px;top:1361.5px;font-size:20px;color:#fff;"><span class="l">UTF-8</span></div>
<div class="t" style="left:2253px;top:1361.5px;font-size:20px;color:#fff;"><span class="l">CRLF</span></div>
<div class="t" style="left:2321px;top:1361.5px;font-size:20px;color:#fff;"><span class="l">C</span></div>
<div class="t" style="left:2361px;top:1361.5px;font-size:20px;color:#fff;"><span class="l">Win32</span></div>
<svg style="left:2445px;top:1349px" width="24" height="24" viewBox="0 0 24 24"><circle cx="12" cy="12" r="11" fill="#fff"/><circle cx="8" cy="9" r="1.8" fill="#007acc"/><circle cx="16" cy="9" r="1.8" fill="#007acc"/><path d="M5.5 13.5 Q12 22 18.5 13.5 Z" fill="#007acc"/></svg>
<svg style="left:2496px;top:1349px" width="24" height="24" viewBox="0 0 24 24"><path d="M12 2 C7 2 6 7 6 11 C6 15 3 17 2 18 H22 C21 17 18 15 18 11 C18 7 17 2 12 2 Z" fill="#fff"/><circle cx="12" cy="20.5" r="2.5" fill="#fff"/></svg>
<div class="t" style="left:2527px;top:1361.5px;font-size:20px;color:#fff;"><span class="l">1</span></div>
</body></html>
